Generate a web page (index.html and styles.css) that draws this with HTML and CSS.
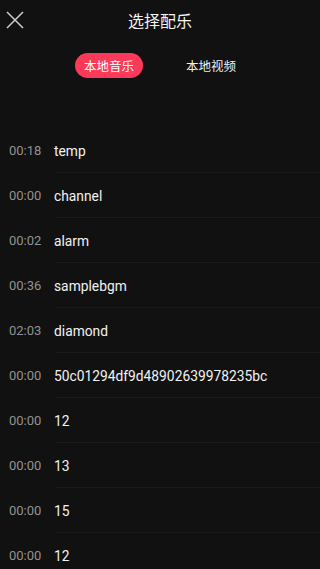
FILE: index.html
```html
<!DOCTYPE html>
<html lang="zh">
<head>
<meta charset="utf-8">
<link rel="stylesheet" href="styles.css">
</head>
<body>
<div class="page">
  <header class="topbar">
    <button class="close" aria-label="关闭">
      <svg width="18" height="18" viewBox="0 0 18 18"><path d="M1 1L17 17M17 1L1 17" stroke="#cfcfcf" stroke-width="1.5" fill="none"/></svg>
    </button>
    <h1 class="title">选择配乐</h1>
  </header>
  <nav class="tabs">
    <span class="tab active">本地音乐</span>
    <span class="tab">本地视频</span>
  </nav>
  <ul class="list">
    <li class="row"><span class="time">00:18</span><span class="name">temp</span></li>
    <li class="row"><span class="time">00:00</span><span class="name">channel</span></li>
    <li class="row"><span class="time">00:02</span><span class="name">alarm</span></li>
    <li class="row"><span class="time">00:36</span><span class="name">samplebgm</span></li>
    <li class="row"><span class="time">02:03</span><span class="name">diamond</span></li>
    <li class="row"><span class="time">00:00</span><span class="name">50c01294df9d48902639978235bc</span></li>
    <li class="row"><span class="time">00:00</span><span class="name">12</span></li>
    <li class="row"><span class="time">00:00</span><span class="name">13</span></li>
    <li class="row"><span class="time">00:00</span><span class="name">15</span></li>
    <li class="row"><span class="time">00:00</span><span class="name">12</span></li>
  </ul>
</div>
</body>
</html>
```
FILE: styles.css
```css
html, body {
  margin: 0;
  padding: 0;
  background: #111111;
  height: 100%;
  overflow: hidden;
}
.page {
  font-family: Roboto, "Noto Sans CJK SC", sans-serif;
  color: #f2f2f2;
}
.topbar {
  position: relative;
  height: 40px;
  display: flex;
  align-items: center;
  justify-content: center;
}
.close {
  position: absolute;
  left: 6px;
  top: 11px;
  width: 18px;
  height: 18px;
  padding: 0;
  border: 0;
  background: none;
  display: block;
}
.close svg { display: block; }
.title {
  margin: 0;
  font-family: "Noto Sans CJK SC", sans-serif;
  font-size: 16px;
  font-weight: 400;
  color: #f4f4f4;
  line-height: 20px;
}
.tabs {
  margin-top: 13px;
  display: flex;
  justify-content: center;
  gap: 34px;
}
.tab {
  height: 25px;
  line-height: 25px;
  padding: 0 9px;
  border-radius: 13px;
  font-family: "Noto Sans CJK SC", sans-serif;
  font-size: 12.5px;
  color: #f0f0f0;
}
.tab.active {
  background: #fb3a5a;
  color: #ffffff;
}
.list {
  list-style: none;
  margin: 50px 0 0;
  padding: 0;
}
.row {
  height: 45px;
  display: flex;
  align-items: center;
  position: relative;
}
.row::after {
  content: "";
  position: absolute;
  left: 55px;
  right: 0;
  bottom: 0;
  height: 1px;
  background: #1a1a1a;
}
.time {
  width: 45px;
  padding-left: 9px;
  font-size: 13px;
  color: #929292;
}
.name {
  font-size: 13.8px;
  color: #f2f2f2;
}
```
